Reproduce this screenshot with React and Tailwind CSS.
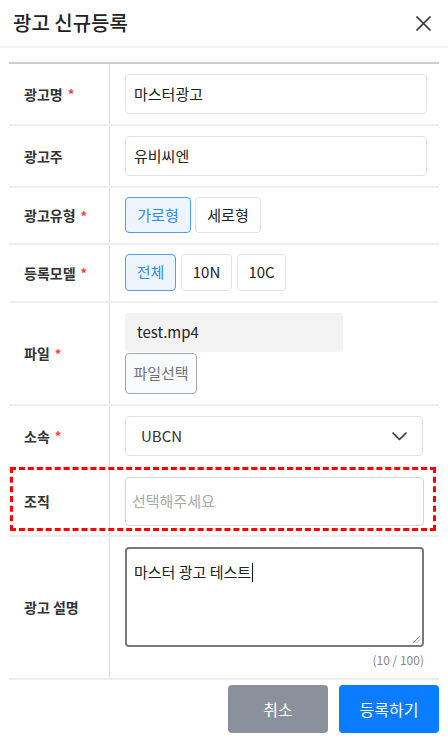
import React from 'react';

const Req = () => <span className="ml-[5px] text-[13px] text-[#ff3b3b]">*</span>;

const Row = ({ label, required, children, className = '', cellClass = '' }) => (
  <div className={`relative grid grid-cols-[101px_1fr] border-b-2 border-[#eeeeee] ${className}`}>
    <div className="flex items-center border-r border-[#dddddd] pl-[15px] text-[14px] font-bold text-[#333333]">
      {label}
      {required && <Req />}
    </div>
    <div className={`pl-[15px] ${cellClass}`}>{children}</div>
  </div>
);

const Chip = ({ active, children, w }) => (
  <div
    className={`flex h-full items-center justify-center rounded-[4px] border text-[15px] ${w} ${
      active ? 'border-[#4f9df5] bg-[#eef4fb] text-[#2f8af0]' : 'border-[#e2e2e2] bg-white text-[#222222]'
    }`}
  >
    {children}
  </div>
);

const CloseIcon = () => (
  <svg width="15" height="15" viewBox="0 0 15 15" fill="none" stroke="#333333" strokeWidth="1.7" strokeLinecap="round">
    <path d="M1 1 L14 14 M14 1 L1 14" />
  </svg>
);

const Chevron = () => (
  <svg width="15" height="9" viewBox="0 0 15 9" fill="none" stroke="#333333" strokeWidth="1.6" strokeLinecap="round" strokeLinejoin="round">
    <path d="M1 1 L7.5 7.5 L14 1" />
  </svg>
);

const Grip = () => (
  <svg width="9" height="9" viewBox="0 0 9 9" fill="none" stroke="#999999" strokeWidth="1">
    <path d="M8 1 L1 8 M8 4.5 L4.5 8" />
  </svg>
);

export default function App() {
  return (
    <div className="w-[448px] min-h-[752px] bg-white font-['Noto_Sans_CJK_KR','Noto_Sans',sans-serif] text-[#222222]">
      {/* Header */}
      <div className="flex h-[48px] items-center justify-between border-b-2 border-[#f3f3f3] pl-[13px] pr-[17px]">
        <h1 className="text-[20px] font-medium leading-none text-[#222222]">광고 신규등록</h1>
        <CloseIcon />
      </div>

      <div className="px-[9px] pt-[14px]">
        <div className="border-t-2 border-[#cccccc]">
          <Row label="광고명" required cellClass="py-[10px] pr-[12px]">
            <div className="flex h-[40px] items-center rounded-[4px] border border-[#e2e2e2] px-[8px] text-[15px]">
              마스터광고
            </div>
          </Row>

          <Row label="광고주" cellClass="py-[10px] pr-[12px]">
            <div className="flex h-[40px] items-center rounded-[4px] border border-[#e2e2e2] px-[8px] text-[15px]">
              유비씨엔
            </div>
          </Row>

          <Row label="광고유형" required cellClass="pt-[9px] pb-[10px]">
            <div className="flex h-[36px] gap-[4px]">
              <Chip active w="w-[66px]">가로형</Chip>
              <Chip w="w-[66px]">세로형</Chip>
            </div>
          </Row>

          <Row label="등록모델" required cellClass="pt-[9px] pb-[10px]">
            <div className="flex h-[37px] gap-[5px]">
              <Chip active w="w-[51px]">전체</Chip>
              <Chip w="w-[51px]">10N</Chip>
              <Chip w="w-[49px]">10C</Chip>
            </div>
          </Row>

          <Row label="파일" required cellClass="pt-[10px] pb-[10px]">
            <div className="flex h-[39px] w-[218px] items-center rounded-[3px] bg-[#f3f3f3] px-[12px] text-[15px]">
              test.mp4
            </div>
            <div className="mt-[1px] flex h-[41px] w-[72px] items-center justify-center rounded-[4px] border border-[#a3a7ae] bg-[#fafbfc] text-[15px] text-[#6f737a]">
              파일선택
            </div>
          </Row>

          <Row label="소속" required cellClass="py-[10px] pr-[16px]">
            <div className="flex h-[40px] items-center justify-between rounded-[4px] border border-[#e2e2e2] pl-[15px] pr-[15px] text-[15px] text-[#333333]">
              <span>UBCN</span>
              <Chevron />
            </div>
          </Row>

          <Row label="조직" cellClass="py-[9px] pr-[15px]">
            <div className="flex h-[49px] items-center rounded-[4px] border border-[#d4d4d4] px-[6px] text-[15px] text-[#aaaaaa]">
              선택해주세요
            </div>
            <div className="pointer-events-none absolute left-[1px] right-[3px] top-[-1px] bottom-[4px] border-[3px] border-dashed border-[#ff0000]" />
          </Row>

          <Row label="광고 설명" cellClass="pt-[10px] pb-[9px] pr-[15px]">
            <div className="relative h-[100px] rounded-[4px] border-2 border-[#7a7a7a] px-[7px] pt-[10px] text-[15px] leading-[20px]">
              마스터 광고 테스트<span className="ml-[1px] inline-block h-[19px] w-[1px] translate-y-[4px] bg-[#111111]" />
              <div className="absolute bottom-[1px] right-[1px]">
                <Grip />
              </div>
            </div>
            <div className="mt-[4px] h-[18px] text-right text-[12px] leading-[18px] text-[#888888]">(10 / 100)</div>
          </Row>

          <div className="mt-[5px] flex justify-end gap-[11px]">
            <button className="h-[48px] w-[100px] rounded-[4px] bg-[#8a919d] text-[16px] text-white">취소</button>
            <button className="h-[48px] w-[100px] rounded-[4px] bg-[#0a7cff] text-[16px] text-white">등록하기</button>
          </div>
        </div>
      </div>
    </div>
  );
}
